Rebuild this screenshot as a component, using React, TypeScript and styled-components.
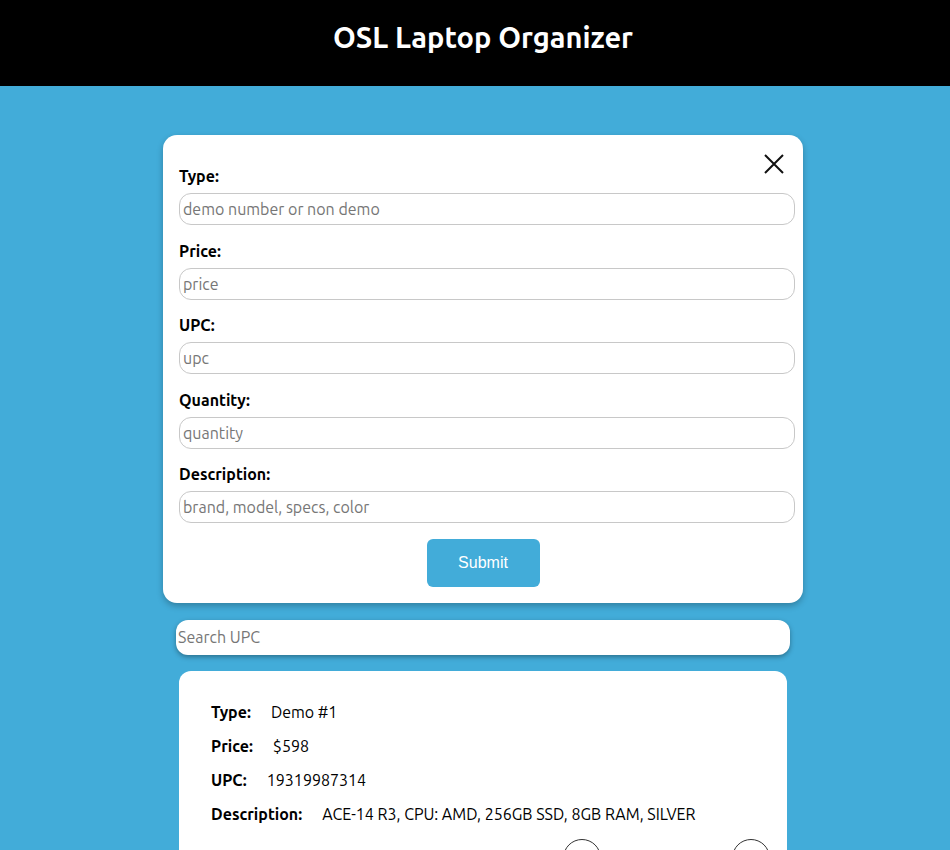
import React from "react";
import styled, { createGlobalStyle } from "styled-components";

const Global = createGlobalStyle`
  html { overflow: hidden; }
  body {
    margin: 0;
    background: #42acd9;
    font-family: "Ubuntu", "Open Sans", sans-serif;
  }
`;

const Page = styled.div`
  width: 966px;
  min-height: 850px;
  background: #42acd9;
`;

const Header = styled.header`
  height: 86px;
  background: #000;
  display: flex;
  align-items: center;
  justify-content: center;
`;

const Title = styled.h1`
  margin: 0;
  padding-bottom: 12px;
  color: #fff;
  font-size: 29px;
  font-weight: 700;
`;

const Main = styled.main`
  display: flex;
  flex-direction: column;
  align-items: center;
  padding-top: 49px;
`;

const FormCard = styled.form`
  position: relative;
  box-sizing: border-box;
  width: 640px;
  background: #fff;
  border-radius: 14px;
  padding: 31px 8px 16px 16px;
  box-shadow: 0 3px 6px rgba(0, 0, 0, 0.25);
  display: flex;
  flex-direction: column;
`;

const CloseButton = styled.button`
  position: absolute;
  top: 17px;
  right: 17px;
  width: 24px;
  height: 24px;
  padding: 0;
  border: none;
  background: transparent;
  display: flex;
  align-items: center;
  justify-content: center;
  cursor: pointer;
`;

const Field = styled.div`
  display: flex;
  flex-direction: column;
  margin-bottom: 15.5px;
`;

const Label = styled.label`
  font-size: 16px;
  font-weight: 700;
  line-height: 20px;
  color: #000;
  margin-bottom: 7px;
`;

const Input = styled.input`
  box-sizing: border-box;
  width: 616px;
  height: 32px;
  border: 1px solid #c8c8c8;
  border-radius: 12px;
  padding: 0 3px;
  font-family: inherit;
  font-size: 16px;
  outline: none;
  &::placeholder { color: #767676; }
`;

const SubmitButton = styled.button`
  align-self: center;
  margin-right: 8px;
  width: 113px;
  height: 48px;
  border: none;
  border-radius: 6px;
  background: #42acd9;
  color: #fff;
  font-family: "Liberation Sans", Arial, sans-serif;
  font-size: 16px;
  cursor: pointer;
`;

const Search = styled.input`
  box-sizing: border-box;
  width: 614px;
  height: 35px;
  margin-top: 17px;
  border: none;
  border-radius: 12px;
  padding: 0 2px;
  font-family: inherit;
  font-size: 16px;
  box-shadow: 0 2px 5px rgba(0, 0, 0, 0.35);
  outline: none;
  &::placeholder { color: #767676; }
`;

const ResultCard = styled.div`
  box-sizing: border-box;
  width: 608px;
  margin-top: 16px;
  background: #fff;
  border-radius: 12px;
  padding: 16px 17px 16px 32px;
`;

const Row = styled.p`
  margin: 16px 0;
  font-size: 16px;
  line-height: 18px;
  color: #000;
  display: flex;
  gap: 20px;
`;

const Key = styled.b`
  font-weight: 700;
`;

const Actions = styled.div`
  display: flex;
  justify-content: flex-end;
  gap: 131px;
`;

const CircleButton = styled.button`
  width: 38px;
  height: 38px;
  border-radius: 50%;
  border: 1px solid #333;
  background: #fff;
  padding: 0;
`;

const fields = [
  { label: "Type:", placeholder: "demo number or non demo" },
  { label: "Price:", placeholder: "price" },
  { label: "UPC:", placeholder: "upc" },
  { label: "Quantity:", placeholder: "quantity" },
  { label: "Description:", placeholder: "brand, model, specs, color" },
];

const details = [
  { k: "Type:", v: "Demo #1" },
  { k: "Price:", v: "$598" },
  { k: "UPC:", v: "19319987314" },
  { k: "Description:", v: "ACE-14 R3, CPU: AMD, 256GB SSD, 8GB RAM, SILVER" },
];

export default function App() {
  return (
    <Page>
      <Global />
      <Header>
        <Title>OSL Laptop Organizer</Title>
      </Header>
      <Main>
        <FormCard onSubmit={(e) => e.preventDefault()}>
          <CloseButton type="button" aria-label="close">
            <svg width="22" height="22" viewBox="0 0 22 22">
              <path d="M2 2 L20 20 M20 2 L2 20" stroke="#111" strokeWidth="2" fill="none" />
            </svg>
          </CloseButton>
          {fields.map((f) => (
            <Field key={f.label}>
              <Label>{f.label}</Label>
              <Input placeholder={f.placeholder} />
            </Field>
          ))}
          <SubmitButton type="submit">Submit</SubmitButton>
        </FormCard>
        <Search placeholder="Search UPC" />
        <ResultCard>
          {details.map((d) => (
            <Row key={d.k}>
              <Key>{d.k}</Key>
              <span>{d.v}</span>
            </Row>
          ))}
          <Actions>
            <CircleButton />
            <CircleButton />
          </Actions>
        </ResultCard>
      </Main>
    </Page>
  );
}
